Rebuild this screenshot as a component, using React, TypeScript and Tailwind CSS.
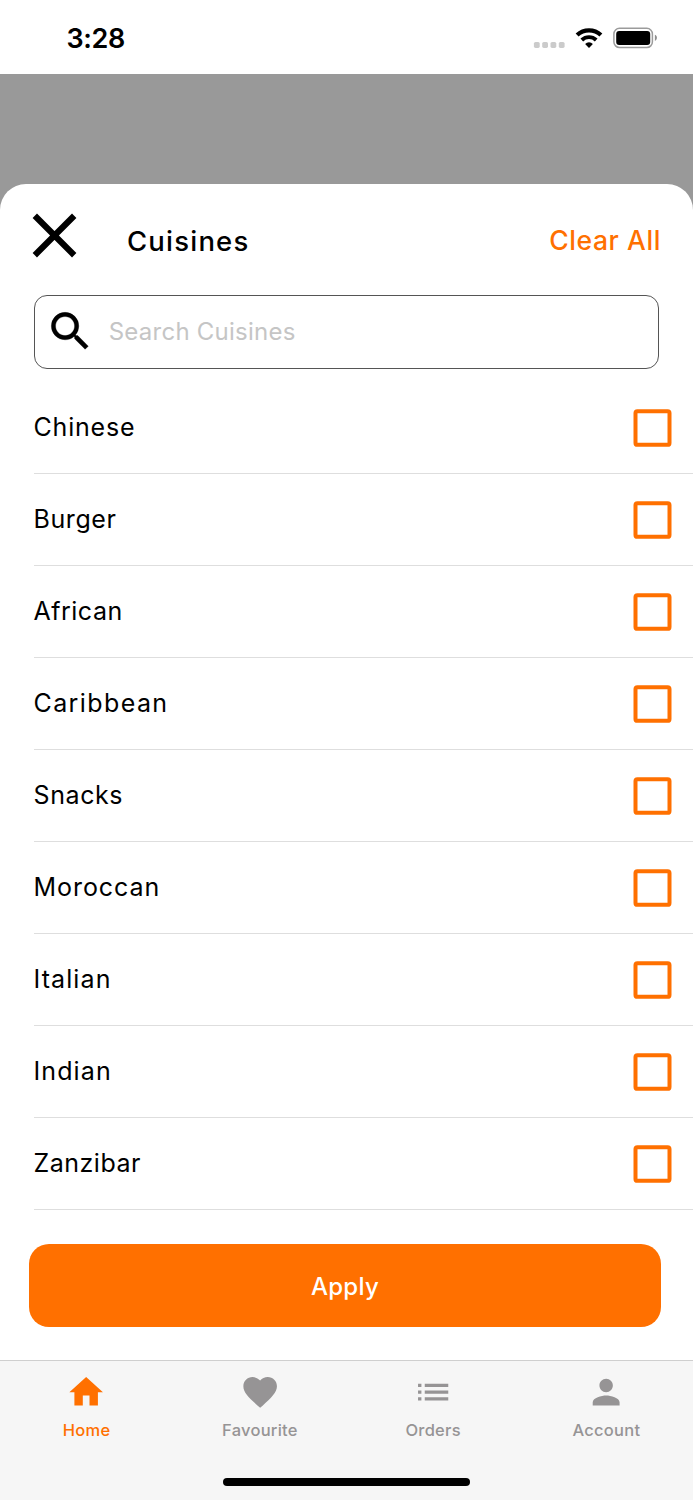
import React from "react";

const cuisines = [
  { name: "Chinese", spacing: "tracking-[0.8px]" },
  { name: "Burger", spacing: "tracking-[0.6px]" },
  { name: "African", spacing: "tracking-[0.5px]" },
  { name: "Caribbean", spacing: "tracking-[1.4px]" },
  { name: "Snacks", spacing: "tracking-[0.6px]" },
  { name: "Moroccan", spacing: "tracking-[0.95px]" },
  { name: "Italian", spacing: "tracking-[1.1px]" },
  { name: "Indian", spacing: "tracking-[1.1px]" },
  { name: "Zanzibar", spacing: "tracking-[0.5px]" },
];

const tabs = [
  {
    label: "Home",
    path: "M10 20v-6h4v6h5v-8h3L12 3 2 12h3v8z",
    color: "text-[#ff7000]",
  },
  {
    label: "Favourite",
    path: "M12 21.35l-1.45-1.32C5.4 15.36 2 12.28 2 8.5 2 5.42 4.42 3 7.5 3c1.74 0 3.41.81 4.5 2.09C13.09 3.81 14.76 3 16.5 3 19.58 3 22 5.42 22 8.5c0 3.78-3.4 6.86-8.55 11.54L12 21.35z",
    color: "text-[#969495]",
  },
  {
    label: "Orders",
    path: "M3 13h2v-2H3v2zm0 4h2v-2H3v2zm0-8h2V7H3v2zm4 4h14v-2H7v2zm0 4h14v-2H7v2zM7 7v2h14V7H7z",
    color: "text-[#969495]",
  },
  {
    label: "Account",
    path: "M12 12c2.21 0 4-1.79 4-4s-1.79-4-4-4-4 1.79-4 4 1.79 4 4 4zm0 2c-2.67 0-8 1.34-8 4v2h16v-2c0-2.66-5.33-4-8-4z",
    color: "text-[#969495]",
  },
];

function StatusBar() {
  return (
    <header className="flex h-[73.5px] shrink-0 justify-between bg-white pr-[35px] pl-[66.5px]">
      <span className="pt-[22px] text-[27px] leading-[33px] font-semibold tracking-[-0.4px]">3:28</span>
      <div className="flex">
        <svg className="mt-[41px] h-[8px] w-[32px]" viewBox="0 0 32 8" fill="#cbcbcb">
          <rect x="0.9" y="0.9" width="5.8" height="6" rx="1.6" />
          <rect x="9.2" y="0.9" width="5.8" height="6" rx="1.6" />
          <rect x="17.5" y="0.9" width="5.8" height="6" rx="1.6" />
          <rect x="25.8" y="0.9" width="5.8" height="6" rx="1.6" />
        </svg>
        <svg className="mt-[27px] ml-[10px] h-[22px] w-[28px]" viewBox="0 0 28 22" fill="none" stroke="#000">
          <path d="M2.100 8.100a17.300 17.300 0 0 1 23.800 0" strokeWidth="4.200" />
          <path d="M6.800 13a10.500 10.500 0 0 1 14.400 0" strokeWidth="3.900" />
          <path d="M14 20.900l-3.900-4a5.700 5.700 0 0 1 7.800 0z" fill="#000" stroke="none" />
        </svg>
        <svg className="mt-[27px] ml-[9px] h-[22px] w-[46px]" viewBox="0 0 46 22">
          <rect x="1.900" y="1.300" width="38.500" height="19.200" rx="5.600" fill="none" stroke="#9b9b9b" strokeWidth="1.500" />
          <rect x="4.200" y="3.900" width="34" height="14" rx="3" />
          <path d="M42.900 7.800c1.400.5 2 1.700 2 3s-.6 2.600-2 3.100z" fill="#8e8e8e" />
        </svg>
      </div>
    </header>
  );
}

function CuisineRow({ name, spacing }: { name: string; spacing: string }) {
  return (
    <label className="ml-[33.5px] flex h-[92.06px] items-center justify-between border-b border-[#dedede] pr-[21px]">
      <span className={`text-[25px] leading-[38px] ${spacing}`}>{name}</span>
      <svg className="mt-[2px] h-[38px] w-[39px]" viewBox="0 0 39 38">
        <rect x="2.500" y="2.200" width="34" height="33.600" rx="1.900" fill="#fff" stroke="#ff7000" strokeWidth="4" />
      </svg>
    </label>
  );
}

export default function App() {
  return (
    <div className="flex h-[1500px] w-[693px] flex-col overflow-hidden bg-[#999999] font-['Inter',sans-serif] text-black">
      <StatusBar />
      <main className="mt-[110.5px] flex min-h-0 flex-1 flex-col rounded-t-[26px] bg-white">
        <div className="flex h-[111px] shrink-0 items-start pr-[32px] pl-[32px]">
          <svg className="mt-[29px] h-[45px] w-[45px]" viewBox="0 0 45 45" stroke="#000" strokeWidth="6.2">
            <path d="M2.8 2.8 42.2 42.2M42.2 2.8 2.8 42.2" />
          </svg>
          <h1 className="ml-[50px] pt-[36.5px] text-[27.5px] leading-[40px] font-medium tracking-[1.2px]">Cuisines</h1>
          <button className="ml-auto pt-[35.5px] text-[26.5px] leading-[40px] font-medium tracking-[0.6px] text-[#ff7000]">Clear All</button>
        </div>
        <div className="mr-[34px] ml-[33.5px] flex h-[73.5px] shrink-0 items-center rounded-[13px] border border-[#555]">
          <svg className="ml-[10.5px] h-[50.7px] w-[50.7px]" viewBox="0 0 24 24">
            <path
              d="M15.5 14h-.79l-.28-.27A6.471 6.471 0 0 0 16 9.5 6.5 6.5 0 1 0 9.5 16c1.61 0 3.09-.59 4.23-1.57l.27.28v.79l5 4.99L20.49 19l-4.99-5zm-6 0C7.01 14 5 11.99 5 9.5S7.01 5 9.5 5 14 7.01 14 9.5 11.99 14 9.5 14z"
              stroke="#000"
              strokeWidth="0.15"
            />
          </svg>
          <span className="ml-[13px] text-[24px] leading-[36px] tracking-[0.25px] text-[#c5c5c5]">Search Cuisines</span>
        </div>
        <div className="mt-[13px] shrink-0">
          {cuisines.map((cuisine) => (
            <CuisineRow key={cuisine.name} {...cuisine} />
          ))}
        </div>
        <button className="mt-[34px] mr-[32px] ml-[29px] h-[83.5px] shrink-0 rounded-[20px] bg-[#ff7000] pt-[2px] text-[24px] leading-[36px] font-medium tracking-[0.3px] text-white">
          Apply
        </button>
      </main>
      <footer className="h-[140px] shrink-0 border-t border-[#cfcfcf] bg-[#f6f6f6]">
        <nav className="grid grid-cols-4">
          {tabs.map((tab) => (
            <a key={tab.label} className={`flex flex-col items-center pt-[11px] ${tab.color}`}>
              <svg className="h-[40.3px] w-[40.3px]" viewBox="0 0 24 24" fill="currentColor">
                <path d={tab.path} />
              </svg>
              <span className="mt-[7.5px] text-[16.5px] leading-[20px] font-medium tracking-[0.25px]">{tab.label}</span>
            </a>
          ))}
        </nav>
        <div className="mx-auto mt-[38px] h-[8.5px] w-[247.5px] rounded-full bg-black" />
      </footer>
    </div>
  );
}
